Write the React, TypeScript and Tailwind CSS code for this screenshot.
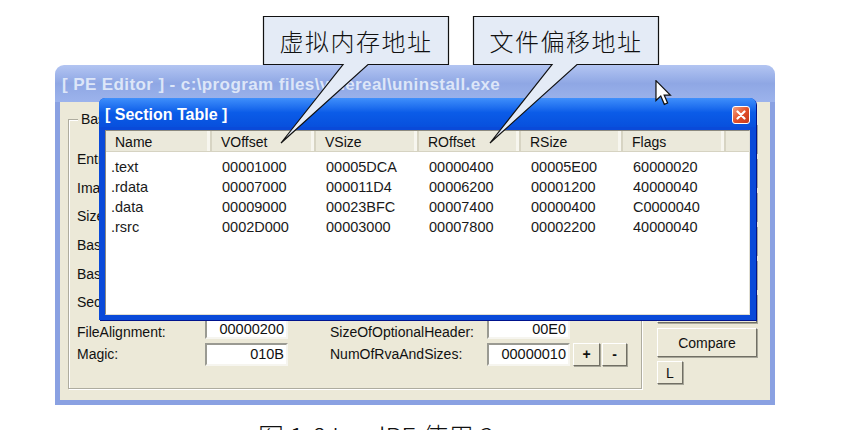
import React from "react";

const sections = [
  { name: ".text", vo: "00001000", vs: "00005DCA", ro: "00000400", rs: "00005E00", flags: "60000020" },
  { name: ".rdata", vo: "00007000", vs: "000011D4", ro: "00006200", rs: "00001200", flags: "40000040" },
  { name: ".data", vo: "00009000", vs: "00023BFC", ro: "00007400", rs: "00000400", flags: "C0000040" },
  { name: ".rsrc", vo: "0002D000", vs: "00003000", ro: "00007800", rs: "00002200", flags: "40000040" },
];

const headerRows = [
  { left: "EntryPoint:", lv: "00001F4E", right: "Subsystem:", rv: "0002" },
  { left: "ImageBase:", lv: "00400000", right: "NumberOfSections:", rv: "0004" },
  { left: "SizeOfImage:", lv: "00030000", right: "TimeDateStamp:", rv: "3E6C2F1A" },
  { left: "BaseOfCode:", lv: "00001000", right: "SizeOfHeaders:", rv: "00000400" },
  { left: "BaseOfData:", lv: "00007000", right: "Characteristics:", rv: "010F" },
  { left: "SectionAlignment:", lv: "00001000", right: "Checksum:", rv: "00000000" },
];

const cols = ["w-[106px]", "w-[104px]", "w-[103px]", "w-[102px]", "w-[102px]", "w-[103px]"];

const font = { fontFamily: '"Liberation Sans", Arial, sans-serif' };
const cjk = { fontFamily: '"Noto Sans CJK SC", "Noto Sans", sans-serif' };

type FieldProps = { value: string; h?: string };
const Field = ({ value, h = "h-[21px]" }: FieldProps) => (
  <div
    className={`${h} w-[83px] bg-white border-2 border-t-[#9a9a92] border-l-[#9a9a92] border-r-[#f6f5ef] border-b-[#f6f5ef] flex items-center justify-end pr-[2px] text-[14.5px] leading-[16px] text-[#111]`}
  >
    {value}
  </div>
);

type BtnProps = { text: string; className?: string };
const Btn = ({ text, className = "" }: BtnProps) => (
  <div
    className={`flex items-center justify-center bg-[#ece9d8] border border-t-white border-l-white border-r-[#716f64] border-b-[#716f64] shadow-[1px_1px_0_#a7a699] text-[14px] leading-[16px] text-[#111] ${className}`}
  >
    {text}
  </div>
);

const MainWindow = () => (
  <div className="w-[720px] h-[340px] flex flex-col" style={font}>
    <div className="h-[37px] rounded-t-[9px] bg-linear-to-b from-[#b3c5f2] via-[#8fa7e4] to-[#9cb3ec] flex items-center pl-[7px]">
      <span className="text-[#dde6f8] font-bold text-[17px] tracking-[0.4px] mt-[2px]">
        [ PE Editor ] - c:\program files\vmereal\uninstall.exe
      </span>
    </div>
    <div className="flex-1 bg-[#ece9d8] border-x-[5px] border-b-[5px] border-[#8aa1e2] flex pl-[8px]">
      <div className="relative mt-[17px] w-[574px] h-[270px] border border-[#aeac9f] shadow-[inset_1px_1px_0_#fff,1px_1px_0_#fff] pl-[8px] pt-[25px]">
        <span className="absolute -top-[9px] left-[9px] bg-[#ece9d8] px-[3px] text-[14px] text-[#111] leading-[16px]">
          Basic PE Header Information
        </span>
        <div className="flex flex-col">
          {headerRows.map((r) => (
            <div key={r.left} className="h-[28.6px] flex items-center text-[14px] leading-[16px] text-[#111]">
              <span className="w-[128px]">{r.left}</span>
              <Field value={r.lv} />
              <span className="ml-[42px] w-[157px]">{r.right}</span>
              <Field value={r.rv} />
            </div>
          ))}
          <div className="h-[22px] flex items-center text-[14px] leading-[16px] text-[#111] mt-[1px]">
            <span className="w-[128px] pt-[7px]">FileAlignment:</span>
            <Field value="00000200" />
            <span className="ml-[42px] w-[157px] pt-[7px]">SizeOfOptionalHeader:</span>
            <Field value="00E0" />
          </div>
          <div className="h-[23px] flex items-center text-[14px] leading-[16px] text-[#111] mt-[3px]">
            <span className="w-[128px]">Magic:</span>
            <Field value="010B" h="h-[23px]" />
            <span className="ml-[42px] w-[157px]">NumOfRvaAndSizes:</span>
            <Field value="00000010" h="h-[23px]" />
            <Btn text="+" className="ml-[3px] w-[27px] h-[23px] font-bold" />
            <Btn text="-" className="ml-[2px] w-[25px] h-[23px] font-bold" />
          </div>
        </div>
      </div>
      <div className="ml-[15px] pt-[22px] flex flex-col gap-[5px]">
        {["OK", "Save", "Sections", "Directories", "FLC", "TDSC"].map((b) => (
          <Btn key={b} text={b} className="w-[100px] h-[29px]" />
        ))}
        <Btn text="Compare" className="w-[100px] h-[29px]" />
        <Btn text="L" className="w-[26px] h-[23px] -mt-[1px]" />
      </div>
    </div>
  </div>
);

const SectionWindow = () => (
  <div
    className="absolute left-[99px] top-[98px] w-[657px] h-[222px] flex flex-col rounded-t-[6px] bg-[#0a4ad9] shadow-[1px_1px_0_#00138c]"
    style={font}
  >
    <div className="h-[29px] shrink-0 rounded-t-[6px] bg-linear-to-b from-[#3f8ffb] via-[#0b5ce8] to-[#0850dd] flex items-center justify-between pl-[6px] pr-[6px]">
      <span className="text-white font-bold text-[16px] leading-[18px] mt-[4px]">[ Section Table ]</span>
      <div className="w-[18px] h-[18px] mt-[4px] rounded-[3px] border border-white bg-linear-to-br from-[#f0a080] via-[#e2502a] to-[#c5381a] flex items-center justify-center">
        <svg width="10" height="10" viewBox="0 0 10 10">
          <path d="M1.5 1.5 L8.5 8.5 M8.5 1.5 L1.5 8.5" stroke="white" strokeWidth="2.2" strokeLinecap="round" />
        </svg>
      </div>
    </div>
    <div className="flex-1 flex px-[6px] pt-[3px] pb-[5px]">
      <div className="flex-1 bg-white border border-t-[#8c8a80] border-l-[#8c8a80] border-r-[#e0ded2] border-b-[#e0ded2] flex flex-col">
        <div className="h-[21px] bg-[#ebe9db] flex border-b border-b-[#d6d3c2] text-[14px] leading-[16px] text-[#111]">
          {["Name", "VOffset", "VSize", "ROffset", "RSize", "Flags"].map((h, i) => (
            <div
              key={h}
              className={`${cols[i]} h-full flex items-center pl-[9px] pt-[1px] border-r-2 border-r-[#d7d4c3] shadow-[inset_-3px_0_0_#f7f6ef]`}
            >
              {h}
            </div>
          ))}
          <div className="flex-1" />
        </div>
        <div className="pt-[5px] flex flex-col text-[14.5px] leading-[16px] text-[#1a1a1a]">
          {sections.map((s) => (
            <div key={s.name} className="h-[20px] flex items-center">
              <span className={`${cols[0]} pl-[5px]`}>{s.name}</span>
              <span className={`${cols[1]} pl-[10px]`}>{s.vo}</span>
              <span className={`${cols[2]} pl-[10px]`}>{s.vs}</span>
              <span className={`${cols[3]} pl-[10px]`}>{s.ro}</span>
              <span className={`${cols[4]} pl-[10px]`}>{s.rs}</span>
              <span className={`${cols[5]} pl-[10px]`}>{s.flags}</span>
            </div>
          ))}
        </div>
      </div>
    </div>
  </div>
);

const Callouts = () => (
  <>
    <svg className="absolute left-0 top-0 pointer-events-none" width="842" height="430">
      <path
        d="M263.5 16.5 H448.5 V64.5 H368 L281 143 L343 64.5 H263.5 Z"
        fill="#e4ebf6"
        stroke="#111"
        strokeWidth="1.2"
      />
      <path
        d="M473.5 16.5 H658.5 V64.5 H577 L490 143 L552 64.5 H473.5 Z"
        fill="#e4ebf6"
        stroke="#111"
        strokeWidth="1.2"
      />
    </svg>
    <div
      className="absolute left-[264px] top-[17px] w-[184px] h-[47px] flex items-center justify-center text-[24px] tracking-[1.5px] text-[#111] font-light"
      style={cjk}
    >
      虚拟内存地址
    </div>
    <div
      className="absolute left-[474px] top-[17px] w-[184px] h-[47px] flex items-center justify-center text-[24px] tracking-[1.5px] text-[#111] font-light"
      style={cjk}
    >
      文件偏移地址
    </div>
  </>
);

const Cursor = () => (
  <svg className="absolute left-[655px] top-[80px]" width="17" height="26" viewBox="0 0 12 19">
    <path d="M0.5 0.5 L0.5 15 L4 11.7 L6.6 17.8 L9 16.8 L6.5 11 L11 11 Z" fill="white" stroke="#111" strokeWidth="0.9" />
  </svg>
);

export default function App() {
  return (
    <div className="relative w-[842px] h-[430px] overflow-hidden bg-white">
      <div className="pt-[65px] pl-[55px]">
        <MainWindow />
      </div>
      <div className="mt-[18px] pl-[258px] text-[26px] leading-none text-[#111] font-light whitespace-nowrap" style={cjk}>
        图 1-8 LordPE 使用 3
      </div>
      <SectionWindow />
      <Callouts />
      <Cursor />
    </div>
  );
}
